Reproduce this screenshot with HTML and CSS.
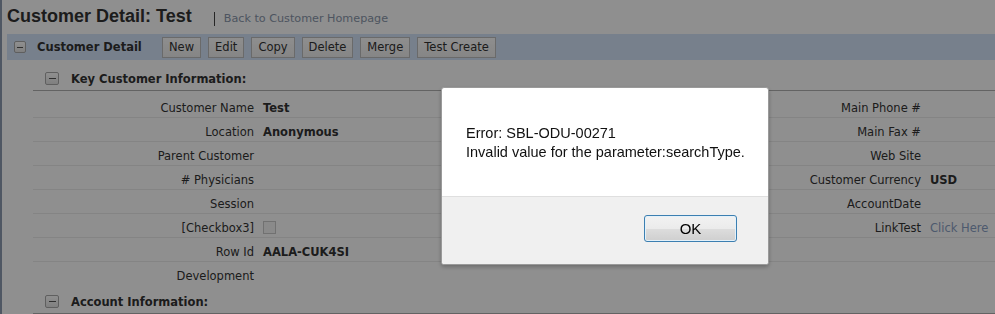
FILE: index.html
```html
<!DOCTYPE html>
<html lang="en">
<head>
    <meta charset="UTF-8">
    <title>Customer Detail: Test</title>
    <link rel="stylesheet" href="styles.css">
</head>
<body>
  <div class="page">
    <div class="title_row">
      <h1 class="page_title">Customer Detail: Test</h1>
      <a class="back_link" href="#">Back to Customer Homepage</a>
    </div>

    <div class="applet_bar">
      <span class="toggle"></span>
      <span class="applet_title">Customer Detail</span>
      <div class="btns">
        <button class="btn">New</button>
        <button class="btn">Edit</button>
        <button class="btn">Copy</button>
        <button class="btn">Delete</button>
        <button class="btn">Merge</button>
        <button class="btn">Test Create</button>
      </div>
    </div>

    <div class="section first">
      <div class="section_head"><span class="toggle big"></span><span>Key Customer Information:</span></div>
      <div class="fields">
        <div class="row"><span class="lbl">Customer Name</span><span class="val">Test</span><span class="lbl">Main Phone #</span><span class="val"></span></div>
        <div class="row"><span class="lbl">Location</span><span class="val">Anonymous</span><span class="lbl">Main Fax #</span><span class="val"></span></div>
        <div class="row"><span class="lbl">Parent Customer</span><span class="val"></span><span class="lbl">Web Site</span><span class="val"></span></div>
        <div class="row"><span class="lbl"># Physicians</span><span class="val"></span><span class="lbl">Customer Currency</span><span class="val">USD</span></div>
        <div class="row"><span class="lbl">Session</span><span class="val"></span><span class="lbl">AccountDate</span><span class="val"></span></div>
        <div class="row"><span class="lbl">[Checkbox3]</span><span class="val"><span class="chk"></span></span><span class="lbl">LinkTest</span><span class="val"><a class="link" href="#">Click Here</a></span></div>
        <div class="row"><span class="lbl">Row Id</span><span class="val">AALA-CUK4SI</span><span class="lbl"></span><span class="val"></span></div>
        <div class="row"><span class="lbl">Development</span><span class="val"></span><span class="lbl"></span><span class="val"></span></div>
      </div>
    </div>

    <div class="section">
      <div class="section_head"><span class="toggle big"></span><span>Account Information:</span></div>
    </div>
  </div>

  <!-- modal error popup -->
  <div class="mask"></div>
  <div class="dialog">
    <div class="dialog_msg">
      Error: SBL-ODU-00271<br>
      Invalid value for the parameter:searchType.
    </div>
    <div class="dialog_foot">
      <button class="ok">OK</button>
    </div>
  </div>
</body>
</html>
```

FILE: styles.css
```css
html, body {
  height: 100%;
}
body {
  margin: 0;
  border-left: 2px solid #8e9cb0;
  background: #fff;
  color: #333;
  font-family: "DejaVu Sans", Verdana, sans-serif;
  font-size: 11.5px;
  overflow: hidden;
}
.page {
  padding-left: 5px;
}
.title_row {
  display: flex;
  align-items: baseline;
  height: 28px;
  padding-top: 6px;
}
.page_title {
  margin: 0;
  font: bold 18px/20px "Liberation Sans", Arial, sans-serif;
  color: #333;
}
.back_link {
  margin-left: 22px;
  padding-left: 9px;
  border-left: 1px solid #444;
  font-size: 11.2px;
  line-height: 14px;
  color: #8a97ab;
  text-decoration: none;
}
.applet_bar {
  display: flex;
  align-items: center;
  height: 26px;
  padding-left: 7px;
  background: #d4e4fa;
}
.toggle {
  display: flex;
  align-items: center;
  justify-content: center;
  box-sizing: border-box;
  width: 12px;
  height: 12px;
  border: 1px solid #a9a9a9;
  border-radius: 2px;
  background: linear-gradient(#fff, #e4e4e4);
}
.toggle::after {
  content: '';
  width: 6px;
  height: 1px;
  background: #555;
}
.toggle.big {
  width: 14px;
  height: 13px;
  margin-right: 12px;
}
.toggle.big::after {
  width: 7px;
}
.applet_title {
  width: 125px;
  margin-left: 11px;
  font-weight: bold;
}
.btns {
  display: flex;
  gap: 7px;
}
.btn {
  height: 21px;
  padding: 0 6px;
  border: 1px solid #bdbdbd;
  border-radius: 0;
  background: linear-gradient(#fdfdfd, #eeeeee);
  color: #333;
  font: 11.5px/19px "DejaVu Sans", Verdana, sans-serif;
}
.section {
  margin-left: 26px;
}
.section.first {
  margin-top: 3px;
}
.section_head {
  display: flex;
  align-items: center;
  height: 23px;
  padding: 4px 0 0 12px;
  border-bottom: 1px solid #b0b0b0;
  font-weight: bold;
}
.fields {
  padding-top: 3px;
}
.row {
  display: grid;
  grid-template-columns: 230px 1fr 200px 65px;
  padding-top: 5px;
  line-height: 18px;
  border-bottom: 1px solid #ebebeb;
}
.row:last-child {
  border-bottom-color: transparent;
}
.lbl {
  padding-right: 9px;
  text-align: right;
}
.val {
  font-weight: bold;
  white-space: nowrap;
}
.link {
  color: #8aa0c4;
  font-weight: normal;
  text-decoration: none;
}
.chk {
  display: inline-block;
  box-sizing: border-box;
  width: 13px;
  height: 13px;
  border: 1px solid #cacaca;
  background: #f6f6f6;
  vertical-align: -2px;
}
.mask {
  position: fixed;
  inset: 0;
  background: rgba(0, 0, 0, 0.44);
}
.dialog {
  position: fixed;
  left: 441px;
  top: 87px;
  width: 328px;
  box-sizing: border-box;
  border: 1px solid #9a9a9a;
  border-radius: 3px;
  background: #fff;
  box-shadow: 0 2px 4px rgba(0, 0, 0, 0.25);
  overflow: hidden;
  font-family: "Liberation Sans", Arial, sans-serif;
}
.dialog_msg {
  box-sizing: border-box;
  height: 108px;
  padding: 36px 0 0 24px;
  font-size: 14.5px;
  line-height: 19px;
  white-space: nowrap;
  color: #111;
}
.dialog_foot {
  display: flex;
  justify-content: flex-end;
  align-items: flex-start;
  box-sizing: border-box;
  height: 68px;
  padding: 18px 31px 0 0;
  border-top: 1px solid #dfdfdf;
  background: #f0f0f0;
}
.ok {
  width: 93px;
  height: 27px;
  border: 1px solid #3c7fb1;
  border-radius: 3px;
  background: linear-gradient(#f2f2f2 0, #ebebeb 50%, #dddddd 51%, #cfcfcf 100%);
  box-shadow: inset 0 0 0 1px #e3f1fa;
  color: #000;
  font: 15px "Liberation Sans", Arial, sans-serif;
}
```
